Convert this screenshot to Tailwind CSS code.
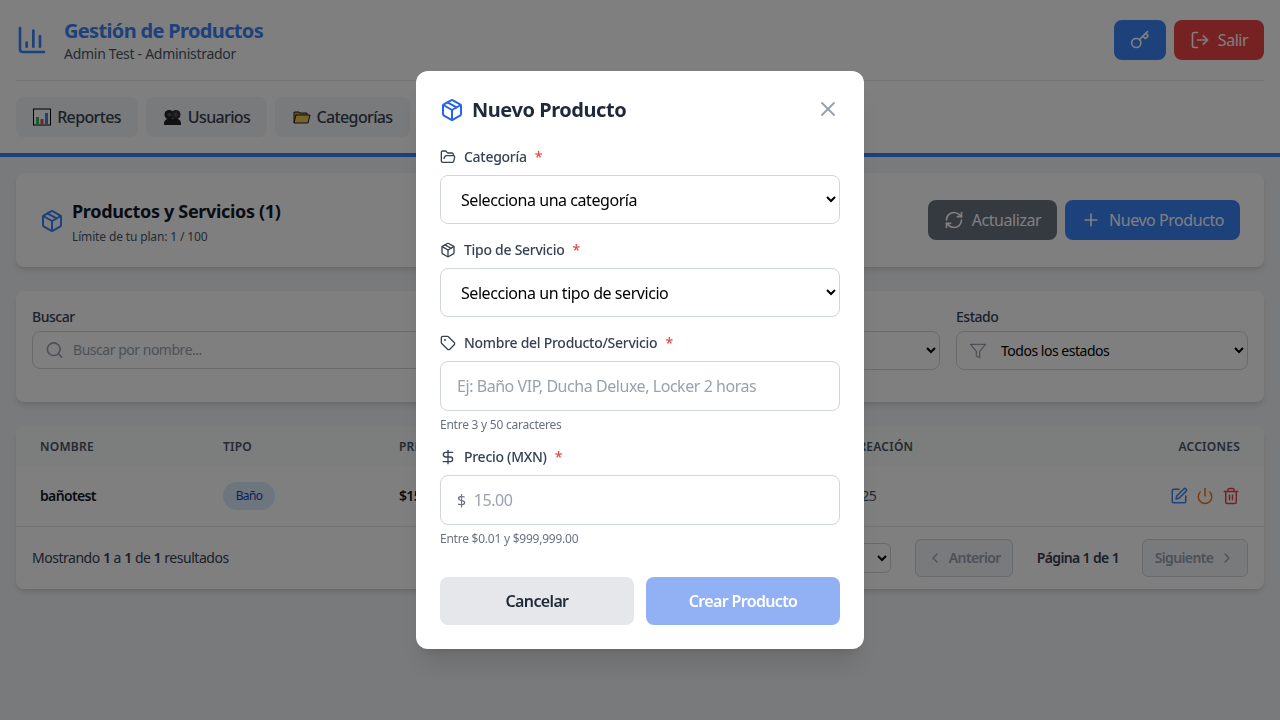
<!DOCTYPE html>
<html lang="es">
  <head>
    <meta charset="UTF-8">
    <meta name="viewport" content="width=device-width, initial-scale=1.0">
    <title>Gestión de Productos</title>
    <script src="https://cdn.jsdelivr.net/npm/@tailwindcss/browser@4"></script>
  </head>

  <body class="bg-gray-100 font-['Noto_Sans','Open_Sans',sans-serif] tracking-[-0.028em] h-[720px] overflow-hidden">
    <!-- Header -->
    <header class="bg-white border-b-4 border-[#3b82f6] px-4 h-[157px]">
      <div class="flex items-center justify-between h-[81px] border-b border-gray-200">
        <div class="flex items-center gap-4">
          <svg class="w-8 h-8 text-[#3b82f6]" viewBox="0 0 24 24" fill="none" stroke="currentColor" stroke-width="2" stroke-linecap="round" stroke-linejoin="round"><path d="M3 3v16a2 2 0 0 0 2 2h16"/><path d="M8 17v-3"/><path d="M13 17V5"/><path d="M18 17V9"/></svg>
          <div>
            <h1 class="text-xl leading-7 font-bold tracking-[-0.033em] text-[#3b82f6]">Gestión de Productos</h1>
            <p class="text-sm leading-[18px] tracking-[-0.02em] text-gray-600">Admin Test - Administrador</p>
          </div>
        </div>
        <div class="flex items-center gap-2">
          <button class="w-[52px] h-10 rounded-lg bg-[#3b82f6] text-white flex items-center justify-center">
            <svg class="w-5 h-5" viewBox="0 0 24 24" fill="none" stroke="currentColor" stroke-width="2" stroke-linecap="round" stroke-linejoin="round"><path d="m15.5 7.5 2.3 2.3a1 1 0 0 0 1.4 0l2.1-2.1a1 1 0 0 0 0-1.4L19 4"/><path d="m21 2-9.6 9.6"/><circle cx="7.5" cy="15.5" r="5.5"/></svg>
          </button>
          <button class="w-[90px] h-10 rounded-lg bg-[#ef4444] text-white flex items-center justify-center gap-2 text-base">
            <svg class="w-5 h-5" viewBox="0 0 24 24" fill="none" stroke="currentColor" stroke-width="2" stroke-linecap="round" stroke-linejoin="round"><path d="M9 21H5a2 2 0 0 1-2-2V5a2 2 0 0 1 2-2h4"/><path d="m16 17 5-5-5-5"/><path d="M21 12H9"/></svg>
            Salir
          </button>
        </div>
      </div>
      <nav class="flex gap-2 pt-4 tracking-[-0.04em]">
        <button class="h-10 w-[122px] rounded-lg bg-gray-100 text-gray-700 text-base font-medium flex items-center justify-center gap-1.5">
          <svg class="w-[18px] h-[18px]" viewBox="0 0 18 18"><rect x="0.5" y="1" width="17" height="16" fill="#fff" stroke="#000"/><rect x="3" y="9" width="3" height="7" fill="#22c55e"/><rect x="7.5" y="11" width="3" height="5" fill="#ef4444"/><rect x="12" y="5" width="3" height="11" fill="#3b82f6"/></svg>
          Reportes
        </button>
        <button class="h-10 w-[121px] rounded-lg bg-gray-100 text-gray-700 text-base font-medium flex items-center justify-center gap-1.5">
          <svg class="w-[19px] h-[17px]" viewBox="0 0 20 18"><circle cx="6.5" cy="6" r="5" fill="#222"/><circle cx="13.5" cy="6" r="5" fill="#333"/><circle cx="6.5" cy="6" r="2" fill="#555"/><circle cx="13.5" cy="6" r="2" fill="#555"/><path d="M1 17v-2c0-3 3-5 6-5h6c3 0 6 2 6 5v2z" fill="#222"/></svg>
          Usuarios
        </button>
        <button class="h-10 w-[135px] rounded-lg bg-gray-100 text-gray-700 text-base font-medium flex items-center justify-center gap-1.5">
          <svg class="w-[18px] h-[18px]" viewBox="0 0 18 18"><path d="M1 15V4h5l1 1h7v2" fill="#c79a3a" stroke="#222"/><path d="M1 15l2-8h14l-2 8z" fill="#f1c65a" stroke="#222"/></svg>
          Categorías
        </button>
      </nav>
    </header>

    <main class="px-4 pt-4">
      <!-- Title card -->
      <section class="bg-white rounded-lg shadow-md h-[94px] px-6 flex items-center justify-between">
        <div class="flex items-center gap-2">
          <svg class="w-6 h-6 text-[#3b82f6] mt-0.5" viewBox="0 0 24 24" fill="none" stroke="currentColor" stroke-width="2" stroke-linecap="round" stroke-linejoin="round"><path d="M21 8a2 2 0 0 0-1-1.73l-7-4a2 2 0 0 0-2 0l-7 4A2 2 0 0 0 3 8v8a2 2 0 0 0 1 1.73l7 4a2 2 0 0 0 2 0l7-4A2 2 0 0 0 21 16Z"/><path d="m3.3 7 8.7 5 8.7-5"/><path d="M12 22V12"/><path d="m7.5 4.27 9 5.15"/></svg>
          <div class="pt-0.5">
            <h2 class="text-lg leading-7 font-bold tracking-[-0.018em] text-gray-900">Productos y Servicios (1)</h2>
            <p class="text-xs leading-4 tracking-[-0.012em] text-gray-600 mt-1">Límite de tu plan: 1 / 100</p>
          </div>
        </div>
        <div class="flex gap-2">
          <button class="w-[129px] h-10 rounded-lg bg-[#6b7280] text-white flex items-center justify-center gap-2 text-base">
            <svg class="w-5 h-5" viewBox="0 0 24 24" fill="none" stroke="currentColor" stroke-width="2" stroke-linecap="round" stroke-linejoin="round"><path d="M3 12a9 9 0 0 1 9-9 9.75 9.75 0 0 1 6.74 2.74L21 8"/><path d="M21 3v5h-5"/><path d="M21 12a9 9 0 0 1-9 9 9.75 9.75 0 0 1-6.74-2.74L3 16"/><path d="M8 16H3v5"/></svg>
            Actualizar
          </button>
          <button class="w-[175px] h-10 rounded-lg bg-[#3b82f6] text-white flex items-center justify-center gap-2 text-base">
            <svg class="w-5 h-5" viewBox="0 0 24 24" fill="none" stroke="currentColor" stroke-width="2" stroke-linecap="round"><path d="M5 12h14"/><path d="M12 5v14"/></svg>
            Nuevo Producto
          </button>
        </div>
      </section>

      <!-- Filters -->
      <section class="bg-white rounded-lg shadow-md mt-6 h-[111px] p-4 grid grid-cols-4 gap-4 tracking-[-0.03em]">
        <div class="col-span-2">
          <label class="block text-sm leading-5 font-medium text-gray-700 mb-1">Buscar</label>
          <div class="h-[38px] rounded-lg border border-gray-300 flex items-center px-3 gap-[9px]">
            <svg class="w-5 h-5 text-gray-400" viewBox="0 0 24 24" fill="none" stroke="currentColor" stroke-width="2" stroke-linecap="round"><circle cx="11" cy="11" r="8"/><path d="m21 21-4.3-4.3"/></svg>
            <input class="text-sm w-full outline-none placeholder:text-gray-400" placeholder="Buscar por nombre...">
          </div>
        </div>
        <div>
          <label class="block text-sm leading-5 font-medium text-gray-700 mb-1">Categoría</label>
          <select class="w-full h-[39px] rounded-lg border border-gray-300 text-sm pl-11"><option>Todas</option></select>
        </div>
        <div>
          <label class="block text-sm leading-5 font-medium text-gray-700 mb-1">Estado</label>
          <div class="relative">
            <svg class="absolute left-3 top-2.5 w-5 h-5 text-gray-400" viewBox="0 0 24 24" fill="none" stroke="currentColor" stroke-width="1.5" stroke-linejoin="round"><path d="M3 4h18l-7 8.5V20l-4-2v-5.5z"/></svg>
            <select class="w-full h-[39px] rounded-lg border border-gray-300 text-sm pl-10"><option>Todos los estados</option></select>
          </div>
        </div>
      </section>

      <!-- Table -->
      <section class="bg-white rounded-lg shadow-md mt-6 overflow-hidden tracking-[-0.04em]">
        <div class="grid grid-cols-[183px_176px_409px_1fr_1fr] items-center h-10 pt-px px-6 bg-gray-50 text-xs font-semibold tracking-[0.02em] text-gray-600">
          <span>NOMBRE</span><span>TIPO</span><span>PRECIO</span><span>FECHA CREACIÓN</span><span class="text-right">ACCIONES</span>
        </div>
        <div class="grid grid-cols-[183px_176px_409px_1fr_1fr] items-center h-[61px] px-6 border-b border-gray-200">
          <span class="text-sm font-semibold text-gray-900">bañotest</span>
          <span><span class="inline-flex items-center justify-center w-[52px] h-7 rounded-full bg-blue-100 text-blue-800 text-xs">Baño</span></span>
          <span class="text-sm font-semibold text-gray-900">$15.00</span>
          <span class="text-sm text-gray-600">13/10/2025</span>
          <span class="flex justify-end gap-2">
            <svg class="w-[18px] h-[18px] text-[#3b82f6]" viewBox="0 0 24 24" fill="none" stroke="currentColor" stroke-width="2" stroke-linecap="round" stroke-linejoin="round"><path d="M12 3H5a2 2 0 0 0-2 2v14a2 2 0 0 0 2 2h14a2 2 0 0 0 2-2v-7"/><path d="M18.4 2.6a2.1 2.1 0 0 1 3 3L12 15l-4 1 1-4Z"/></svg>
            <svg class="w-[18px] h-[18px] text-[#f97316]" viewBox="0 0 24 24" fill="none" stroke="currentColor" stroke-width="2" stroke-linecap="round"><path d="M12 2v10"/><path d="M18.4 6.6a9 9 0 1 1-12.77.04"/></svg>
            <svg class="w-[18px] h-[18px] text-[#ef4444]" viewBox="0 0 24 24" fill="none" stroke="currentColor" stroke-width="2" stroke-linecap="round" stroke-linejoin="round"><path d="M3 6h18"/><path d="M19 6v14a2 2 0 0 1-2 2H7a2 2 0 0 1-2-2V6"/><path d="M8 6V4a2 2 0 0 1 2-2h4a2 2 0 0 1 2 2v2"/><path d="M10 11v6"/><path d="M14 11v6"/></svg>
          </span>
        </div>
        <div class="flex items-center justify-between h-[62px] px-4">
          <p class="text-sm tracking-[-0.034em] text-gray-700">Mostrando <b class="font-semibold">1</b> a <b class="font-semibold">1</b> de <b class="font-semibold">1</b> resultados</p>
          <div class="flex items-center">
            <select class="w-[70px] h-[30px] rounded-md border border-gray-300 text-sm mr-6"><option>10</option></select>
            <button class="w-[98px] h-[38px] rounded-md border border-gray-300 bg-gray-100 text-gray-400 text-sm font-semibold flex items-center justify-center gap-1.5">
              <svg class="w-4 h-4" viewBox="0 0 24 24" fill="none" stroke="currentColor" stroke-width="2" stroke-linecap="round" stroke-linejoin="round"><path d="m15 18-6-6 6-6"/></svg>
              Anterior
            </button>
            <span class="text-sm font-semibold text-gray-700 pl-6 pr-[23px]">Página 1 de 1</span>
            <button class="w-[106px] h-[38px] rounded-md border border-gray-300 bg-gray-100 text-gray-400 text-sm font-semibold flex items-center justify-center gap-1.5">
              Siguiente
              <svg class="w-4 h-4" viewBox="0 0 24 24" fill="none" stroke="currentColor" stroke-width="2" stroke-linecap="round" stroke-linejoin="round"><path d="m9 18 6-6-6-6"/></svg>
            </button>
          </div>
        </div>
      </section>
    </main>

    <!-- Modal -->
    <div class="fixed inset-0 bg-black/50 flex items-center justify-center">
      <div class="bg-white rounded-xl shadow-xl w-[448px] h-[578px] p-6">
        <div class="flex items-center justify-between h-[30px]">
          <div class="flex items-center gap-2">
            <svg class="w-6 h-6 text-[#2563eb]" viewBox="0 0 24 24" fill="none" stroke="currentColor" stroke-width="2" stroke-linecap="round" stroke-linejoin="round"><path d="M21 8a2 2 0 0 0-1-1.73l-7-4a2 2 0 0 0-2 0l-7 4A2 2 0 0 0 3 8v8a2 2 0 0 0 1 1.73l7 4a2 2 0 0 0 2 0l7-4A2 2 0 0 0 21 16Z"/><path d="m3.3 7 8.7 5 8.7-5"/><path d="M12 22V12"/><path d="m7.5 4.27 9 5.15"/></svg>
            <h3 class="text-xl font-bold text-gray-800">Nuevo Producto</h3>
          </div>
          <svg class="w-6 h-6 text-gray-400 -mt-0.5" viewBox="0 0 24 24" fill="none" stroke="currentColor" stroke-width="2" stroke-linecap="round"><path d="M18 6 6 18"/><path d="m6 6 12 12"/></svg>
        </div>

        <label class="flex items-center gap-2 text-sm leading-5 font-medium tracking-[-0.02em] text-gray-700 mt-[22px] h-5">
          <svg class="w-4 h-4" viewBox="0 0 24 24" fill="none" stroke="currentColor" stroke-width="2" stroke-linecap="round" stroke-linejoin="round"><path d="m6 14 1.5-2.9A2 2 0 0 1 9.24 10H20a2 2 0 0 1 1.94 2.5l-1.54 6a2 2 0 0 1-1.95 1.5H4a2 2 0 0 1-2-2V5a2 2 0 0 1 2-2h3.9a2 2 0 0 1 1.69.9l.81 1.2a2 2 0 0 0 1.67.9H18a2 2 0 0 1 2 2v2"/></svg>
          Categoría <span class="text-[#ef4444]">*</span>
        </label>
        <select class="block w-full h-[49px] mt-2 rounded-lg border border-gray-300 bg-white px-4 text-base text-black"><option>Selecciona una categoría</option></select>

        <label class="flex items-center gap-2 text-sm leading-5 font-medium tracking-[-0.02em] text-gray-700 mt-4 h-5">
          <svg class="w-4 h-4" viewBox="0 0 24 24" fill="none" stroke="currentColor" stroke-width="2" stroke-linecap="round" stroke-linejoin="round"><path d="M21 8a2 2 0 0 0-1-1.73l-7-4a2 2 0 0 0-2 0l-7 4A2 2 0 0 0 3 8v8a2 2 0 0 0 1 1.73l7 4a2 2 0 0 0 2 0l7-4A2 2 0 0 0 21 16Z"/><path d="m3.3 7 8.7 5 8.7-5"/><path d="M12 22V12"/><path d="m7.5 4.27 9 5.15"/></svg>
          Tipo de Servicio <span class="text-[#ef4444]">*</span>
        </label>
        <select class="block w-full h-[49px] mt-2 rounded-lg border border-gray-300 bg-white px-4 text-base text-black"><option>Selecciona un tipo de servicio</option></select>

        <label class="flex items-center gap-2 text-sm leading-5 font-medium tracking-[-0.02em] text-gray-700 mt-4 h-5">
          <svg class="w-4 h-4" viewBox="0 0 24 24" fill="none" stroke="currentColor" stroke-width="2" stroke-linecap="round" stroke-linejoin="round"><path d="M12.6 2.6A2 2 0 0 0 11.2 2H4a2 2 0 0 0-2 2v7.2a2 2 0 0 0 .6 1.4l8.7 8.7a2.4 2.4 0 0 0 3.4 0l6.6-6.6a2.4 2.4 0 0 0 0-3.4z"/><circle cx="7.5" cy="7.5" r=".5" fill="currentColor"/></svg>
          Nombre del Producto/Servicio <span class="text-[#ef4444]">*</span>
        </label>
        <input class="block w-full h-[50px] mt-2 rounded-lg border border-gray-300 px-4 text-base placeholder:text-gray-400" placeholder="Ej: Baño VIP, Ducha Deluxe, Locker 2 horas">
        <p class="text-xs leading-4 tracking-[-0.02em] text-gray-500 mt-1.5">Entre 3 y 50 caracteres</p>

        <label class="flex items-center gap-2 text-sm leading-5 font-medium tracking-[-0.02em] text-gray-700 mt-[14px] h-5">
          <svg class="w-4 h-4" viewBox="0 0 24 24" fill="none" stroke="currentColor" stroke-width="2" stroke-linecap="round" stroke-linejoin="round"><path d="M12 2v20"/><path d="M19 5H8.5a3.5 3.5 0 0 0 0 7h7a3.5 3.5 0 0 1 0 7H5"/></svg>
          Precio (MXN) <span class="text-[#ef4444]">*</span>
        </label>
        <div class="flex items-center h-[50px] mt-2 rounded-lg border border-gray-300 px-4 gap-2 text-base">
          <span class="text-gray-500">$</span>
          <input class="w-full outline-none placeholder:text-gray-400" placeholder="15.00">
        </div>
        <p class="text-xs leading-4 tracking-[-0.02em] text-gray-500 mt-1.5">Entre $0.01 y $999,999.00</p>

        <div class="grid grid-cols-2 gap-3 mt-[30px] tracking-[-0.04em]">
          <button class="h-12 rounded-lg bg-gray-200 text-gray-800 text-base font-semibold">Cancelar</button>
          <button class="h-12 rounded-lg bg-[#92b1f5] text-white text-base font-semibold">Crear Producto</button>
        </div>
      </div>
    </div>
  </body>
</html>
